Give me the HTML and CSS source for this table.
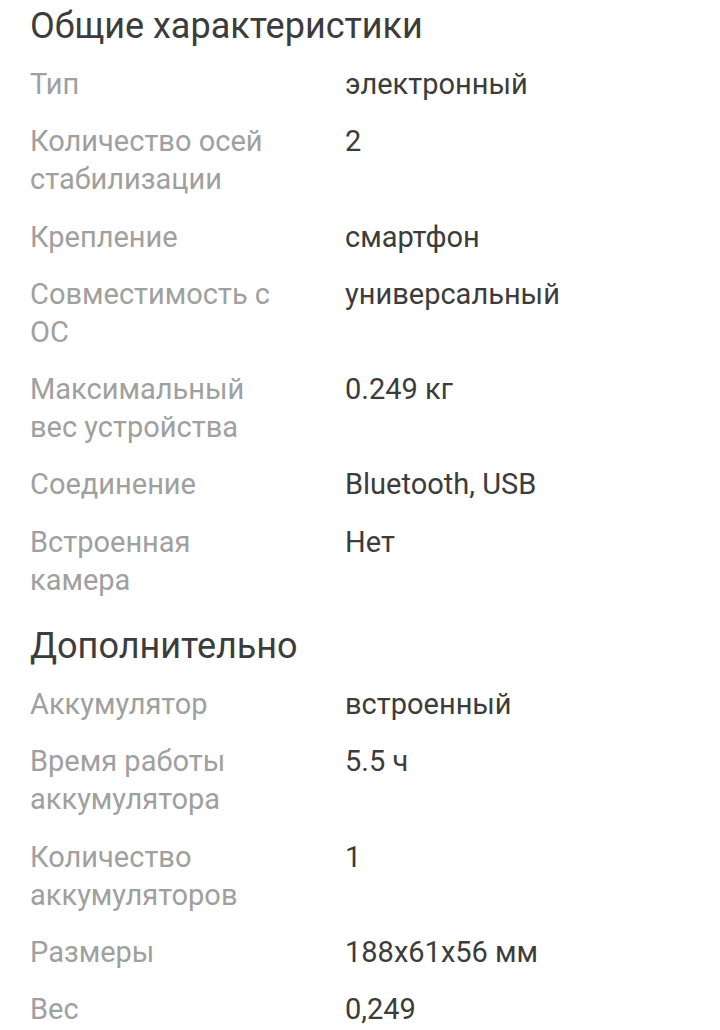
FILE: index.html
```html
<!DOCTYPE html>
<html lang="ru">
<head>
<meta charset="utf-8">
<link rel="stylesheet" href="styles.css">
</head>
<body>
<div class="specs">
  <section class="group">
    <h2 class="group-title">Общие характеристики</h2>
    <div class="row"><div class="label">Тип</div><div class="value">электронный</div></div>
    <div class="row"><div class="label">Количество осей стабилизации</div><div class="value">2</div></div>
    <div class="row"><div class="label">Крепление</div><div class="value">смартфон</div></div>
    <div class="row"><div class="label">Совместимость с ОС</div><div class="value">универсальный</div></div>
    <div class="row"><div class="label">Максимальный вес устройства</div><div class="value">0.249 кг</div></div>
    <div class="row"><div class="label">Соединение</div><div class="value">Bluetooth, USB</div></div>
    <div class="row"><div class="label">Встроенная камера</div><div class="value">Нет</div></div>
  </section>
  <section class="group">
    <h2 class="group-title">Дополнительно</h2>
    <div class="row"><div class="label">Аккумулятор</div><div class="value">встроенный</div></div>
    <div class="row"><div class="label">Время работы аккумулятора</div><div class="value">5.5 ч</div></div>
    <div class="row"><div class="label">Количество аккумуляторов</div><div class="value">1</div></div>
    <div class="row"><div class="label">Размеры</div><div class="value">188x61x56 мм</div></div>
    <div class="row"><div class="label">Вес</div><div class="value">0,249</div></div>
  </section>
</div>
</body>
</html>
```
FILE: styles.css
```css
html, body {
  margin: 0;
  padding: 0;
  background: #ffffff;
}
body {
  font-family: Roboto, "Noto Sans", sans-serif;
  -webkit-font-smoothing: antialiased;
}
.specs {
  padding: 0 30px;
}
.group + .group {
  padding-top: 2px;
}
.group-title {
  margin: 6px 0 19px;
  font-size: 36px;
  line-height: 40px;
  font-weight: 400;
  color: #3c3c3c;
}
.row {
  display: grid;
  grid-template-columns: 315px 1fr;
  margin-bottom: 19.3px;
  font-size: 29px;
  line-height: 38px;
}
.label {
  color: #a0a0a0;
  padding-right: 60px;
}
.value {
  color: #3c3c3c;
}
```
